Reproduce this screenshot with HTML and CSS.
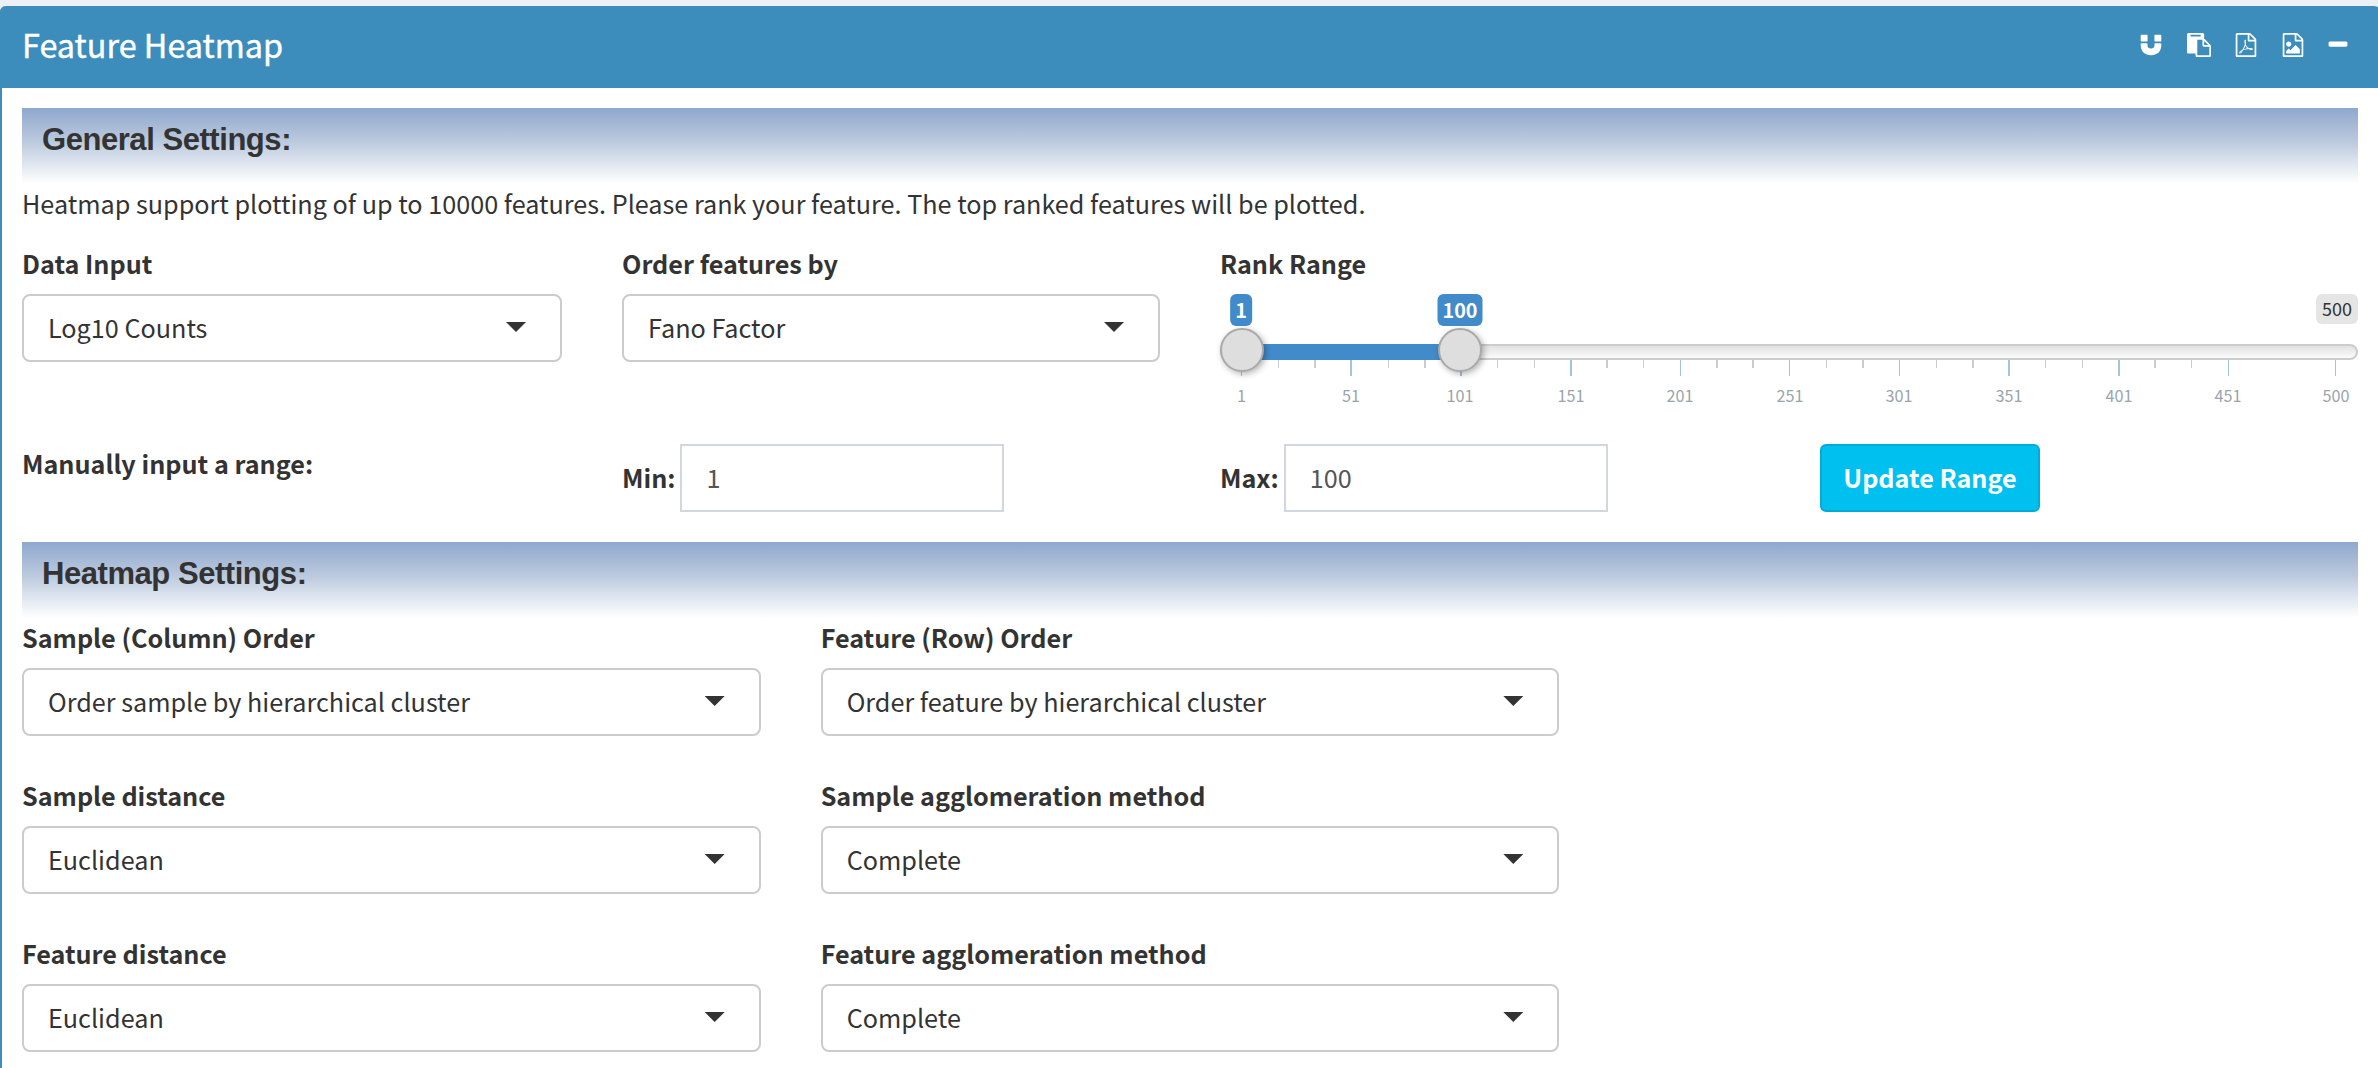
FILE: index.html
```html
<!DOCTYPE html>
<html lang="en">
<head>
<meta charset="utf-8">
<title>Feature Heatmap</title>
<link rel="stylesheet" href="styles.css">
</head>
<body>
<section class="box">
  <header class="box-header">
    <h3 class="box-title">Feature Heatmap</h3>
    <div class="tools">
      <svg class="icon" viewBox="0 0 1792 1792"><path d="M1664 832v128q0 201-98.500 362t-274 251.500-395.500 90.500-395.500-90.500-274-251.500-98.500-362v-128q0-26 19-45t45-19h384q26 0 45 19t19 45v128q0 52 23.500 90t53.500 57 71 30 64 13 44 2 44-2 64-13 71-30 53.500-57 23.500-90v-128q0-26 19-45t45-19h384q26 0 45 19t19 45zm-1024-640v384q0 26-19 45t-45 19h-384q-26 0-45-19t-19-45v-384q0-26 19-45t45-19h384q26 0 45 19t19 45zm1024 0v384q0 26-19 45t-45 19h-384q-26 0-45-19t-19-45v-384q0-26 19-45t45-19h384q26 0 45 19t19 45z"/></svg>
      <svg class="icon icon-copy" viewBox="0 0 1792 1792"><path d="M768 1664h896v-640h-416q-40 0-68-28t-28-68v-416h-384v1152zm256-1440v-64q0-13-9.500-22.500t-22.500-9.500h-704q-13 0-22.500 9.500t-9.500 22.500v64q0 13 9.500 22.500t22.500 9.500h704q13 0 22.500-9.500t9.500-22.500zm256 672h299l-299-299v299zm512 128v672q0 40-28 68t-68 28h-960q-40 0-68-28t-28-68v-160h-544q-40 0-68-28t-28-68v-1344q0-40 28-68t68-28h1088q40 0 68 28t28 68v328q21 13 36 28l408 408q28 28 48 76t20 88z"/></svg>
      <svg class="icon icon-pdf" viewBox="0 0 1792 1792"><path d="M1596 380q28 28 48 76t20 88v1152q0 40-28 68t-68 28h-1344q-40 0-68-28t-28-68v-1600q0-40 28-68t68-28h896q40 0 88 20t76 48zm-444-244v376h376q-10-29-22-41l-313-313q-12-12-41-22zm384 1528v-1024h-416q-40 0-68-28t-28-68v-416h-768v1536h1280zm-514-593q33 26 84 56 59-7 117-7 147 0 177 49 16 22 2 52 0 1-1 2l-2 2v1q-6 38-71 38-48 0-115-20t-130-53q-221 24-392 83-153 262-242 262-15 0-28-7l-24-12q-1-1-6-5-10-10-6-36 9-40 56-91.500t132-96.500q14-9 23 6 2 2 2 4 52-85 107-197 68-136 104-262-24-82-30.500-159.500t6.500-127.500q11-40 42-40h22q23 0 35 15 18 21 9 68-2 6-4 8 1 3 1 8v30q-2 123-14 192 55 164 146 238zm-576 411q52-24 137-158-51 40-87.500 84t-49.500 74zm398-920q-15 42-2 132 1-7 7-44 0-3 7-43 1-4 4-8-1-1-1-2t-1-2q-1-22-13-36 0 1-1 2v2zm-124 661q135-54 284-81-2-1-13-9.500t-16-13.500q-76-67-127-176-27 86-83 197-30 56-45 83zm646-16q-24-24-140-24 76 28 124 28 14 0 18-1 0-1-2-3z"/></svg>
      <svg class="icon icon-image" viewBox="0 0 1792 1792"><path d="M1596 380q28 28 48 76t20 88v1152q0 40-28 68t-68 28h-1344q-40 0-68-28t-28-68v-1600q0-40 28-68t68-28h896q40 0 88 20t76 48zm-444-244v376h376q-10-29-22-41l-313-313q-12-12-41-22zm384 1528v-1024h-416q-40 0-68-28t-28-68v-416h-768v1536h1280zm-128-448v320h-1024v-192l192-192 128 128 384-384zm-832-192q-80 0-136-56t-56-136 56-136 136-56 136 56 56 136-56 136-136 56z"/></svg>
      <svg class="icon icon-minus" viewBox="0 0 1792 1792"><path d="M1600 736v192q0 40-28 68t-68 28H288q-40 0-68-28t-28-68V736q0-40 28-68t68-28h1216q40 0 68 28t28 68z"/></svg>
    </div>
  </header>
  <div class="box-body">
    <h4 class="banner">General Settings:</h4>
    <p class="info">Heatmap support plotting of up to 10000 features. Please rank your feature. The top ranked features will be plotted.</p>
    <div class="grid-four source-row">
      <div class="field">
        <div class="label">Data Input</div>
        <div class="select"><span>Log10 Counts</span><i class="caret"></i></div>
      </div>
      <div class="field">
        <div class="label">Order features by</div>
        <div class="select"><span>Fano Factor</span><i class="caret"></i></div>
      </div>
      <div class="field wide">
        <div class="label">Rank Range</div>
        <div class="slider">
          <div class="track"></div>
          <div class="fill"></div>
          <svg class="ticks" width="1138" height="16" viewBox="0 0 1138 16">
            <path class="minor" d="M58 0h1v8h-1zM94 0h2v8h-2zM168 0h1v8h-1zM204 0h2v8h-2zM277 0h1v8h-1zM314 0h1v8h-1zM386 0h2v8h-2zM423 0h1v8h-1zM496 0h2v8h-2zM532 0h2v8h-2zM606 0h1v8h-1zM642 0h2v8h-2zM716 0h1v8h-1zM752 0h2v8h-2zM825 0h1v8h-1zM862 0h1v8h-1zM934 0h2v8h-2zM971 0h1v8h-1z"/>
            <path class="major" d="M21 0h1v16h-1zM130 0h2v16h-2zM240 0h2v16h-2zM350 0h2v16h-2zM460 0h1v16h-1zM569 0h1v16h-1zM679 0h1v16h-1zM788 0h2v16h-2zM898 0h2v16h-2zM1008 0h1v16h-1zM1115 0h1v16h-1z"/>
          </svg>
          <div class="handle" style="left:0"></div>
          <div class="handle" style="left:218px"></div>
          <span class="bubble" style="left:21px">1</span>
          <span class="bubble" style="left:240px">100</span>
          <span class="limit">500</span>
          <span class="tick-label" style="left:21.500px">1</span>
          <span class="tick-label" style="left:131px">51</span>
          <span class="tick-label" style="left:240px">101</span>
          <span class="tick-label" style="left:351px">151</span>
          <span class="tick-label" style="left:460px">201</span>
          <span class="tick-label" style="left:570px">251</span>
          <span class="tick-label" style="left:679px">301</span>
          <span class="tick-label" style="left:789px">351</span>
          <span class="tick-label" style="left:899px">401</span>
          <span class="tick-label" style="left:1008px">451</span>
          <span class="tick-label" style="left:1116px">500</span>
        </div>
      </div>
    </div>
    <div class="grid-four range-row">
      <div class="label">Manually input a range:</div>
      <div class="inline-field"><label for="min">Min:</label><input id="min" class="number" value="1"></div>
      <div class="inline-field"><label for="max">Max:</label><input id="max" class="number" value="100"></div>
      <div><button class="btn">Update Range</button></div>
    </div>
    <h4 class="banner">Heatmap Settings:</h4>
    <div class="grid-three">
      <div class="field">
        <div class="label">Sample (Column) Order</div>
        <div class="select"><span>Order sample by hierarchical cluster</span><i class="caret"></i></div>
      </div>
      <div class="field">
        <div class="label">Feature (Row) Order</div>
        <div class="select"><span>Order feature by hierarchical cluster</span><i class="caret"></i></div>
      </div>
      <div class="field first">
        <div class="label">Sample distance</div>
        <div class="select"><span>Euclidean</span><i class="caret"></i></div>
      </div>
      <div class="field">
        <div class="label">Sample agglomeration method</div>
        <div class="select"><span>Complete</span><i class="caret"></i></div>
      </div>
      <div class="field first">
        <div class="label">Feature distance</div>
        <div class="select"><span>Euclidean</span><i class="caret"></i></div>
      </div>
      <div class="field">
        <div class="label">Feature agglomeration method</div>
        <div class="select"><span>Complete</span><i class="caret"></i></div>
      </div>
    </div>
  </div>
</section>
</body>
</html>
```
FILE: styles.css
```css
* {
  box-sizing: border-box;
}

body {
  margin: 0;
  height: 1068px;
  overflow: hidden;
  padding-top: 6px;
  background: #ecf0f5;
  color: #333;
  font-family: "Noto Sans CJK SC", "Noto Sans", sans-serif;
  font-size: 25.2px;
}

.box {
  width: 2380px;
  height: 1100px;
  border: 2px solid #3c8dbc;
  border-top: 0;
  border-radius: 6px;
  background: #fff;
}

.box-header {
  display: flex;
  justify-content: space-between;
  height: 82px;
  margin: 0 -2px;
  padding: 0 30px 0 22px;
  border-radius: 6px 6px 0 0;
  background: #3c8dbc;
  color: #fff;
}

.box-title {
  margin: 0;
  font-size: 32.4px;
  font-weight: 400;
  line-height: 76px;
  -webkit-text-stroke: 0.4px #fff;
}

.tools {
  display: flex;
  padding-top: 27.4px;
}

.icon {
  display: block;
  width: 24px;
  height: 24px;
  fill: #fff;
}

.icon-copy {
  margin-left: 24px;
}

.icon-pdf {
  margin-left: 23.3px;
}

.icon-image {
  margin-left: 22.4px;
}

.icon-minus {
  margin-left: 21.3px;
}

.box-body {
  padding: 20px;
}

.banner {
  height: 76px;
  margin: 0;
  padding-left: 20px;
  background: linear-gradient(#8fa8ce 0%, #bccade 45%, #dbe3ee 70%, #fff 100%);
  font: bold 31px/63px "Liberation Sans", Arial, sans-serif;
  letter-spacing: -0.45px;
}

.info {
  margin: 0;
  line-height: 38px;
}

.grid-four {
  display: grid;
  grid-template-columns: 540px 538px 540px 538px;
  column-gap: 60px;
}

.grid-three {
  display: grid;
  grid-template-columns: repeat(3, 1fr);
  gap: 40px 60px;
}

.wide {
  grid-column: span 2;
}

.first {
  grid-column: 1;
}

.source-row {
  margin-top: 22px;
}

.range-row {
  height: 68px;
  margin: 30px 0;
}

.label {
  font-weight: 700;
  line-height: 38px;
}

.select {
  display: flex;
  justify-content: space-between;
  height: 68px;
  margin-top: 12px;
  padding: 0 34px 0 24px;
  border: 2px solid #ccc;
  border-radius: 8px;
  line-height: 62px;
}

.caret {
  width: 20px;
  height: 10px;
  margin-top: 26px;
  background: #333;
  clip-path: polygon(0 0, 100% 0, 50% 100%);
}

.inline-field {
  display: flex;
  gap: 5px;
  font-weight: 700;
  line-height: 66px;
}

.number {
  width: 324px;
  height: 68px;
  padding: 0 24px 2px;
  border: 2px solid #d2d6de;
  border-radius: 0;
  background: #fff;
  color: #555;
  font: inherit;
  font-weight: 400;
}

.btn {
  display: block;
  width: 220px;
  height: 68px;
  padding: 0 0 2px;
  border: 2px solid #00acd6;
  border-radius: 6px;
  background: #00c0ef;
  color: #fff;
  font: inherit;
  font-weight: 700;
}

.slider {
  position: relative;
  height: 120px;
  margin-top: 12px;
}

.track {
  position: absolute;
  top: 50px;
  left: 0;
  width: 100%;
  height: 16px;
  border: 2px solid #ccc;
  border-radius: 8px;
  background: linear-gradient(#e2e2e2, #fbfbfb);
}

.fill {
  position: absolute;
  top: 50px;
  left: 22px;
  width: 218px;
  height: 16px;
  background: #428bca;
}

.ticks {
  position: absolute;
  top: 66px;
  left: 0;
}

.minor {
  fill: #ccc;
}

.major {
  fill: #a0c5e4;
}

.handle {
  position: absolute;
  top: 34px;
  width: 44px;
  height: 44px;
  border: 2px solid #aaa;
  border-radius: 50%;
  background: #dedede;
  box-shadow: 2px 2px 6px rgba(0, 0, 0, 0.3);
}

.bubble {
  position: absolute;
  top: 0;
  height: 32px;
  padding: 0 5px;
  transform: translateX(-50%);
  border-radius: 6px;
  background: #428bca;
  color: #fff;
  font-size: 19.8px;
  font-weight: 700;
  line-height: 31px;
}

.limit {
  position: absolute;
  top: 0;
  right: 0;
  height: 30px;
  padding: 0 6px;
  border-radius: 6px;
  background: #e5e5e5;
  font-size: 18px;
  line-height: 29px;
}

.tick-label {
  position: absolute;
  top: 87px;
  transform: translateX(-50%);
  color: #99a4ac;
  font-size: 16.2px;
  line-height: 28px;
}
```
